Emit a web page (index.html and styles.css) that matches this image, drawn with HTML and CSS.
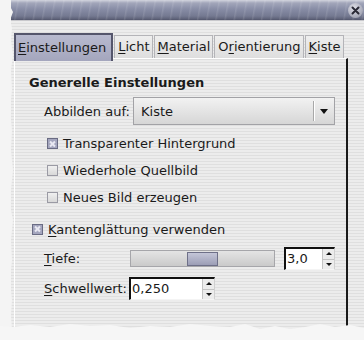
FILE: index.html
```html
<!DOCTYPE html>
<html>
<head>
<link rel="stylesheet" href="styles.css">
</head>
<body>

<div class="screen">
  <div class="window">
    <div class="titlebar">
      <span class="close-btn">
        <svg width="15" height="15" viewBox="0 0 15 15">
          <path d="M4.5 4.5 L10.5 10.5 M10.5 4.5 L4.5 10.5" stroke="#2a2a36" stroke-width="2" stroke-linecap="round"/>
        </svg>
      </span>
    </div>

    <div class="client">
      <!-- Reiter -->
      <div class="tabs">
        <div class="tab active"><u>E</u>instellungen</div>
        <div class="tab"><u>L</u>icht</div>
        <div class="tab"><u>M</u>aterial</div>
        <div class="tab">O<u>r</u>ientierung</div>
        <div class="tab"><u>K</u>iste</div>
      </div>

      <!-- Seite: Einstellungen -->
      <div class="panel">
        <div class="section-title">Generelle Einstellungen</div>

        <div class="map-row">
          <span class="label">Abbilden auf:</span>
          <div class="combo">
            <span class="combo-text">Kiste</span>
            <span class="combo-sep"></span>
            <span class="combo-arrow"></span>
          </div>
        </div>

        <div class="checks">
          <label class="check"><span class="box checked"></span>Transparenter Hintergrund</label>
          <label class="check"><span class="box"></span>Wiederhole Quellbild</label>
          <label class="check"><span class="box"></span>Neues Bild erzeugen</label>
        </div>

        <label class="check antialias"><span class="box checked"></span><span><u>K</u>antenglättung verwenden</span></label>

        <div class="field-row depth-row">
          <span class="label"><u>T</u>iefe:</span>
          <div class="slider"><span class="thumb"></span></div>
          <div class="spin depth-spin">
            <span class="spin-text">3,0</span>
            <span class="spin-btns"><span class="up"></span><span class="down"></span></span>
          </div>
        </div>

        <div class="field-row threshold-row">
          <span class="label"><u>S</u>chwellwert:</span>
          <div class="spin threshold-spin">
            <span class="spin-text">0,250</span>
            <span class="spin-btns"><span class="up"></span><span class="down"></span></span>
          </div>
        </div>
      </div>
    </div>
  </div>

  <!-- ausgerissene Kanten -->
  <svg class="tear" width="364" height="340" viewBox="0 0 364 340">
    <path d="M0 0 L11 0 L10 6 L13 12 L10 20 L12 28 L11 40 L13 55 L11 70 L12 90 L10 110 L12 130 L11 150 L13 170 L11 190 L10 205 L13 220 L11 240 L12 260 L10 280 L12 300 L11 315 L12 330 L0 340 Z" fill="#f4f4f4"/>
    <path d="M0 326 L12 327 L30 325 L50 327 L70 324 L90 326 L110 325 L130 328 L150 326 L170 327 L190 324 L210 326 L230 327 L245 324 L260 329 L275 326 L290 329 L305 327 L320 324 L335 327 L350 325 L364 328 L364 340 L0 340 Z" fill="#f6f6f6"/>
  </svg>
</div>

</body>
</html>
```

FILE: styles.css
```css
/* Grundlage */
html, body {
  margin: 0;
  padding: 0;
}
body {
  width: 364px;
  height: 340px;
  overflow: hidden;
  background: #f4f4f4;
  font-family: "DejaVu Sans", sans-serif;
  font-size: 13px;
  color: #1a1a1a;
}
u {
  text-decoration: underline;
  text-underline-offset: 2px;
}
.screen {
  position: relative;
  width: 364px;
  height: 340px;
}
.window {
  margin-left: 11px;
  height: 340px;
  background: repeating-linear-gradient(to bottom, #ececec 0, #ececec 2px, #dfdfdf 2px, #dfdfdf 3px);
}

/* Titelleiste */
.titlebar {
  height: 20px;
  display: flex;
  justify-content: flex-end;
  align-items: center;
  padding-right: 1px;
  background:
    repeating-linear-gradient(100deg, rgba(255,255,255,0) 0, rgba(255,255,255,0) 6px, rgba(255,255,255,0.10) 7px, rgba(255,255,255,0) 9px),
    linear-gradient(to bottom, #d2d4de 0, #a2a6ba 3px, #888da6 9px, #747991 16px, #5e6278 19px, #50536a 20px);
  border-bottom: 1px solid #c8c8cc;
}
.close-btn {
  width: 15px;
  height: 15px;
  border-radius: 50%;
  background: radial-gradient(circle at 40% 35%, #e0e0e8 0, #b2b4c2 55%, #8a8c9c 100%);
  display: block;
}

/* Reiter */
.client {
  padding: 12px 0 0 3px;
}
.tabs {
  display: flex;
  align-items: flex-end;
  height: 25px;
  position: relative;
  z-index: 1;
}
.tab {
  height: 23px;
  line-height: 22px;
  padding: 0 2px 0 3px;
  margin-right: 1px;
  box-sizing: border-box;
  border: 1px solid #b4b4b8;
  border-bottom: none;
  background: linear-gradient(to bottom, #eeeeee, #dedede);
}
.tab.active {
  height: 28px;
  margin-bottom: -3px;
  line-height: 25px;
  padding: 0 5px 0 2px;
  border: 2px solid #55566c;
  border-bottom: none;
  background: linear-gradient(to bottom, #b8bacf, #a4a6bd);
}

/* Seite */
.panel {
  width: 334px;
  height: 270px;
  box-sizing: border-box;
  border-top: 1px solid #ffffff;
  border-left: 1px solid #ffffff;
  border-right: 2px solid #1a1a1a;
  padding: 16px 11px 0 14px;
}
.section-title {
  font-weight: bold;
  height: 16px;
  line-height: 16px;
  margin-bottom: 6px;
}
.map-row {
  display: flex;
  align-items: center;
  padding-left: 15px;
  height: 28px;
}
.map-row .label {
  width: 89px;
}
.combo {
  flex: 1;
  height: 28px;
  box-sizing: border-box;
  border: 1px solid #a2a2a6;
  background: linear-gradient(to bottom, #f2f2f2, #d6d6d6);
  display: flex;
  align-items: center;
  padding-left: 7px;
}
.combo-text {
  flex: 1;
}
.combo-sep {
  width: 1px;
  height: 20px;
  background: #ffffff;
  border-left: 1px solid #a8a8a8;
  margin-right: 5px;
}
.combo-arrow {
  width: 0;
  height: 0;
  border-left: 4px solid transparent;
  border-right: 4px solid transparent;
  border-top: 5px solid #111;
  margin-right: 6px;
}

/* Kontrollkästchen */
.checks {
  margin-top: 5px;
  padding-left: 18px;
}
.check {
  display: flex;
  align-items: center;
  height: 27px;
}
.box {
  width: 11px;
  height: 11px;
  box-sizing: border-box;
  border: 1px solid #9a9aa4;
  background: linear-gradient(to bottom, #f0f0f0, #d8d8d8);
  margin-right: 5px;
  position: relative;
}
.box.checked {
  border-color: #6a6c84;
  background: #a4a6be;
}
.box.checked::before,
.box.checked::after {
  content: "";
  position: absolute;
  left: 1px;
  top: 3.5px;
  width: 7px;
  height: 2px;
  background: #e8e8f2;
  transform: rotate(45deg);
}
.box.checked::after {
  transform: rotate(-45deg);
}
.check.antialias {
  margin-top: 5px;
  padding-left: 3px;
  height: 26px;
}

/* Tiefe / Schwellwert */
.field-row {
  display: flex;
  align-items: center;
  height: 23px;
  padding-left: 15px;
}
.depth-row {
  margin-top: 5px;
}
.depth-row .label {
  width: 86px;
}
.slider {
  width: 145px;
  height: 17px;
  box-sizing: border-box;
  border: 1px solid #a6a6aa;
  background: linear-gradient(to bottom, #e4e4e4, #cacaca);
  padding: 1px 0 0 56px;
}
.thumb {
  display: block;
  width: 31px;
  height: 14px;
  box-sizing: border-box;
  border: 1px solid #6e7088;
  background: linear-gradient(to bottom, #c4c6d8, #9c9eb6);
}
.spin {
  height: 23px;
  box-sizing: border-box;
  border-top: 2px solid #111;
  border-left: 2px solid #111;
  border-right: 1px solid #d0d0d0;
  border-bottom: 1px solid #f4f4f4;
  background: #ffffff;
  display: flex;
}
.depth-spin {
  width: 51px;
  margin-left: 9px;
}
.threshold-row {
  margin-top: 7px;
}
.threshold-row .label {
  width: 85px;
}
.threshold-spin {
  width: 86px;
}
.spin-text {
  flex: 1;
  line-height: 19px;
  padding-left: 1px;
}
.spin-btns {
  width: 11px;
  display: flex;
  flex-direction: column;
  border-left: 1px solid #c4c4c4;
  background: #ececec;
}
.spin-btns span {
  flex: 1;
  display: flex;
  align-items: center;
  justify-content: center;
}
.spin-btns .up {
  border-bottom: 1px solid #c4c4c4;
}
.spin-btns .up::before {
  content: "";
  border-left: 3px solid transparent;
  border-right: 3px solid transparent;
  border-bottom: 3px solid #111;
}
.spin-btns .down::before {
  content: "";
  border-left: 3px solid transparent;
  border-right: 3px solid transparent;
  border-top: 3px solid #111;
}

/* Rissrand */
.tear {
  position: absolute;
  left: 0;
  top: 0;
  pointer-events: none;
}
```
